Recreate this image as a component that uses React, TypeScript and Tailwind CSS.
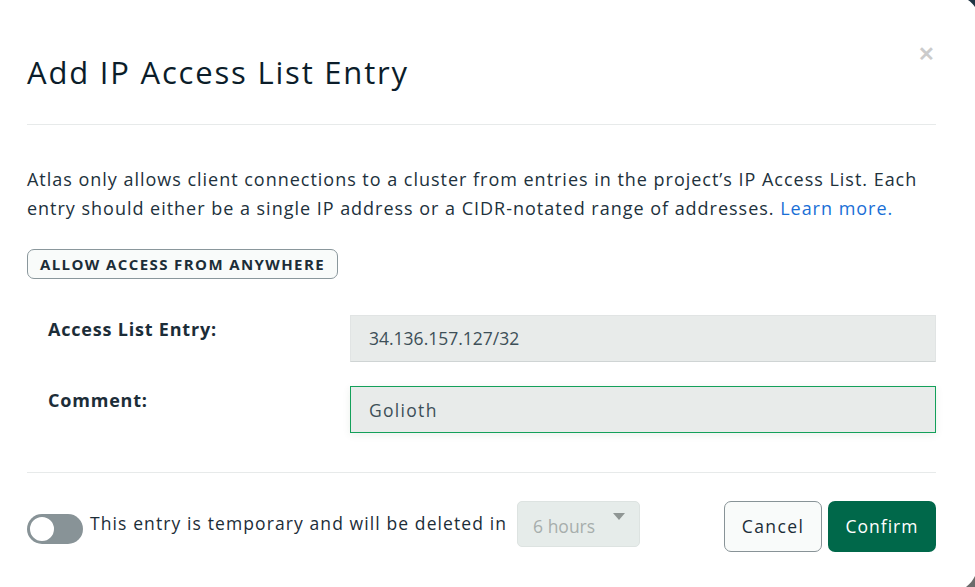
import React, { useState } from 'react';

const font = { fontFamily: '"Open Sans", Lato, sans-serif' };

const App: React.FC = (): JSX.Element => {
  const [temporary, setTemporary] = useState(false);
  const [comment, setComment] = useState('Golioth');

  return (
    <div className="relative w-[975px] h-[587px] bg-white overflow-hidden text-[#21313c]" style={font}>
      <div className="pl-[27px] pr-[39px] pt-[48px]">
        <div className="flex items-start justify-between">
          <h1 className="text-[31px] leading-[48px] text-[#0b1d2a] font-normal tracking-[1.8px]">Add IP Access List Entry</h1>
          <button className="text-[#cbcbcb] text-[20px] font-bold leading-none mt-[-4px] mr-[1px]">✕</button>
        </div>
        <div className="mt-[28px] border-t border-[#e7eaea]" />

        <p className="mt-[40px] text-[18px] leading-[29px] text-[#21313c] tracking-[0.98px]">
          <span>Atlas only allows client connections to a cluster from entries in the project’s IP Access List. Each</span>
          <br />
          <span>entry should either be a single IP address or a CIDR-notated range of addresses.</span>{' '}
          <a className="text-[#1a6fd6]" href="#">Learn more.</a>
        </p>

        <button className="mt-[26px] h-[30px] px-[12px] rounded-[7px] border border-[#8a979c] bg-[#f9fbfa] text-[15px] font-bold tracking-[1.4px] text-[#1c2d38]">
          ALLOW ACCESS FROM ANYWHERE
        </button>

        <div className="mt-[36px] pl-[21px] flex flex-col gap-[24px]">
          <div className="flex items-start">
            <label className="w-[302px] pt-[1px] text-[18px] font-bold text-[#1c2d38] tracking-[0.8px]">Access List Entry:</label>
            <div className="flex-1 h-[47px] flex items-center px-[18px] bg-[#e8ebea] border border-[#e1e4e4] border-b-[#cfd4d4] text-[17.5px] text-[#3d4f58]">
              34.136.157.127/32
            </div>
          </div>
          <div className="flex items-start">
            <label className="w-[302px] pt-[1px] text-[18px] font-bold text-[#1c2d38] tracking-[0.8px]">Comment:</label>
            <input
              autoFocus
              value={comment}
              onChange={e => setComment(e.target.value)}
              className="flex-1 h-[47px] px-[18px] bg-[#e8ebea] border border-[#13a05a] text-[17.5px] tracking-[1.3px] text-[#3d4f58] caret-[#21313c] outline-none shadow-[0_2px_8px_rgba(0,80,30,0.08)]"
            />
          </div>
        </div>

        <div className="mt-[39px] border-t border-[#e7eaea]" />

        <div className="mt-[28px] flex items-start">
          <button
            onClick={() => setTemporary(!temporary)}
            className="relative w-[56px] h-[30px] rounded-full bg-[#889397] shrink-0 mt-[13px]"
          >
            <span className="absolute left-[1px] top-[1px] w-[28px] h-[28px] rounded-full bg-white border-[2px] border-[#889397]" />
          </button>
          <span className="ml-[7px] mt-[10px] text-[17.5px] leading-[24px] text-[#1c2d38] tracking-[1.1px]">This entry is temporary and will be deleted in</span>
          <div className="ml-[10px] w-[123px] h-[46px] rounded-[5px] bg-[#e6ecea] border border-[#dde3e1] flex items-center justify-between pl-[15px] pr-[14px]">
            <span className="text-[17.5px] text-[#a7aeac] mt-[4px]">6 hours</span>
            <svg width="12" height="8" viewBox="0 0 12 8" className="mt-[-14px]">
              <path d="M0 0 H12 L6 7 Z" fill="#8f9694" />
            </svg>
          </div>
          <div className="ml-auto flex gap-[6px]">
            <button className="w-[98px] h-[51px] rounded-[7px] border border-[#889397] bg-[#f9fbfa] text-[17.5px] tracking-[1.4px] text-[#1c2d38]">Cancel</button>
            <button className="w-[108px] h-[51px] rounded-[7px] bg-[#00684a] text-[17.5px] tracking-[1px] text-white">Confirm</button>
          </div>
        </div>
      </div>

      <svg className="absolute right-0 top-0" width="8" height="7" viewBox="0 0 8 7">
        <path d="M1 0 H8 V7 C6 4 4 2 1 0 Z" fill="#203443" />
      </svg>
      <svg className="absolute right-0 bottom-0" width="9" height="11" viewBox="0 0 9 11">
        <path d="M9 0 V11 H0 C4 8 7 4 9 0 Z" fill="#6c6c6c" />
      </svg>
    </div>
  );
};

export default App;
